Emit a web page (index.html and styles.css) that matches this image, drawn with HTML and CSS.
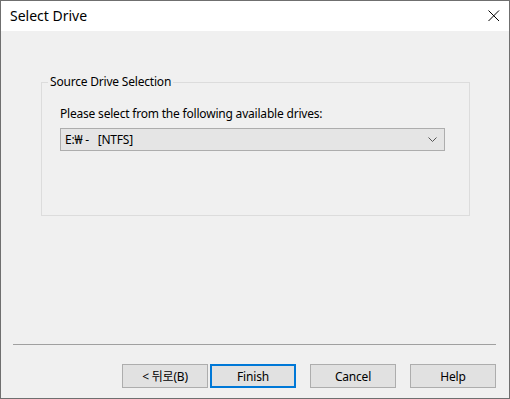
FILE: index.html
```html
<!DOCTYPE html>
<html>
<head>
<meta charset="utf-8">
<link rel="stylesheet" href="styles.css">
</head>
<body>
<div class="window">
  <div class="titlebar">
    <span class="title">Select Drive</span>
    <svg class="close" width="12" height="12" viewBox="0 0 12 12"><path d="M0.5 0.5 L11 11 M11 0.5 L0.5 11" stroke="#000" stroke-width="1" fill="none"/></svg>
  </div>
  <div class="content">
    <fieldset class="group">
      <legend class="legend">Source Drive Selection</legend>
      <div class="label">Please select from the following available drives:</div>
      <div class="combo">
        <span class="combo-text">E:₩ -&nbsp;&nbsp;&nbsp;[NTFS]</span>
        <svg class="chev" width="9" height="5" viewBox="0 0 9 5"><path d="M0.5 0.5 L4.5 4.5 L8.5 0.5" stroke="#555" stroke-width="1" fill="none"/></svg>
      </div>
    </fieldset>
    <div class="spacer"></div>
    <div class="separator"></div>
    <div class="buttons">
      <div class="btn back">&lt; 뒤로(B)</div>
      <div class="btn default">Finish</div>
      <div class="btn gap">Cancel</div>
      <div class="btn gap">Help</div>
    </div>
  </div>
</div>
</body>
</html>
```
FILE: styles.css
```css
html, body {
  margin: 0;
  padding: 0;
  background: #f0f0f0;
}
body {
  font-family: "Noto Sans", "Noto Sans CJK KR", sans-serif;
  font-size: 12px;
  letter-spacing: -0.2px;
  color: #000;
}
.window {
  width: 510px;
  height: 399px;
  box-sizing: border-box;
  border: 1px solid #6f6f6f;
  display: flex;
  flex-direction: column;
  background: #f0f0f0;
}
.titlebar {
  height: 30px;
  background: #fff;
  display: flex;
  align-items: center;
  justify-content: space-between;
  flex: none;
}
.title {
  font-size: 14px;
  letter-spacing: 0;
  margin-left: 9px;
  margin-top: -2px;
}
.close {
  margin-right: 9px;
  margin-top: -1px;
}
.content {
  flex: 1;
  display: flex;
  flex-direction: column;
}
.group {
  margin: 43px 0 0 40px;
  padding: 0 24px 64px 18px;
  width: 429px;
  box-sizing: border-box;
  border: 1px solid #dcdcdc;
  flex: none;
  min-width: 0;
}
.legend {
  margin-left: -12px;
  padding: 0 2px;
  line-height: 16px;
}
.label {
  margin-top: 16px;
  line-height: 16px;
}
.combo {
  margin-top: 6px;
  height: 23px;
  box-sizing: border-box;
  border: 1px solid #adadad;
  background: #e5e5e5;
  display: flex;
  align-items: center;
  justify-content: space-between;
  padding: 0 4px 0 4px;
}
.combo-text {
  line-height: 21px;
}
.chev {
  margin-right: 3px;
}
.spacer {
  flex: 1;
}
.separator {
  height: 1px;
  background: #a0a0a0;
  margin: 0 13px 0 12px;
}
.buttons {
  display: flex;
  justify-content: flex-end;
  margin: 19px 13px 10px 0;
}
.btn {
  width: 86px;
  height: 24px;
  box-sizing: border-box;
  border: 1px solid #adadad;
  background: #e1e1e1;
  display: flex;
  align-items: center;
  justify-content: center;
}
.default {
  border: 2px solid #0078d7;
  margin-left: 2px;
}
.gap {
  margin-left: 14px;
}
```
